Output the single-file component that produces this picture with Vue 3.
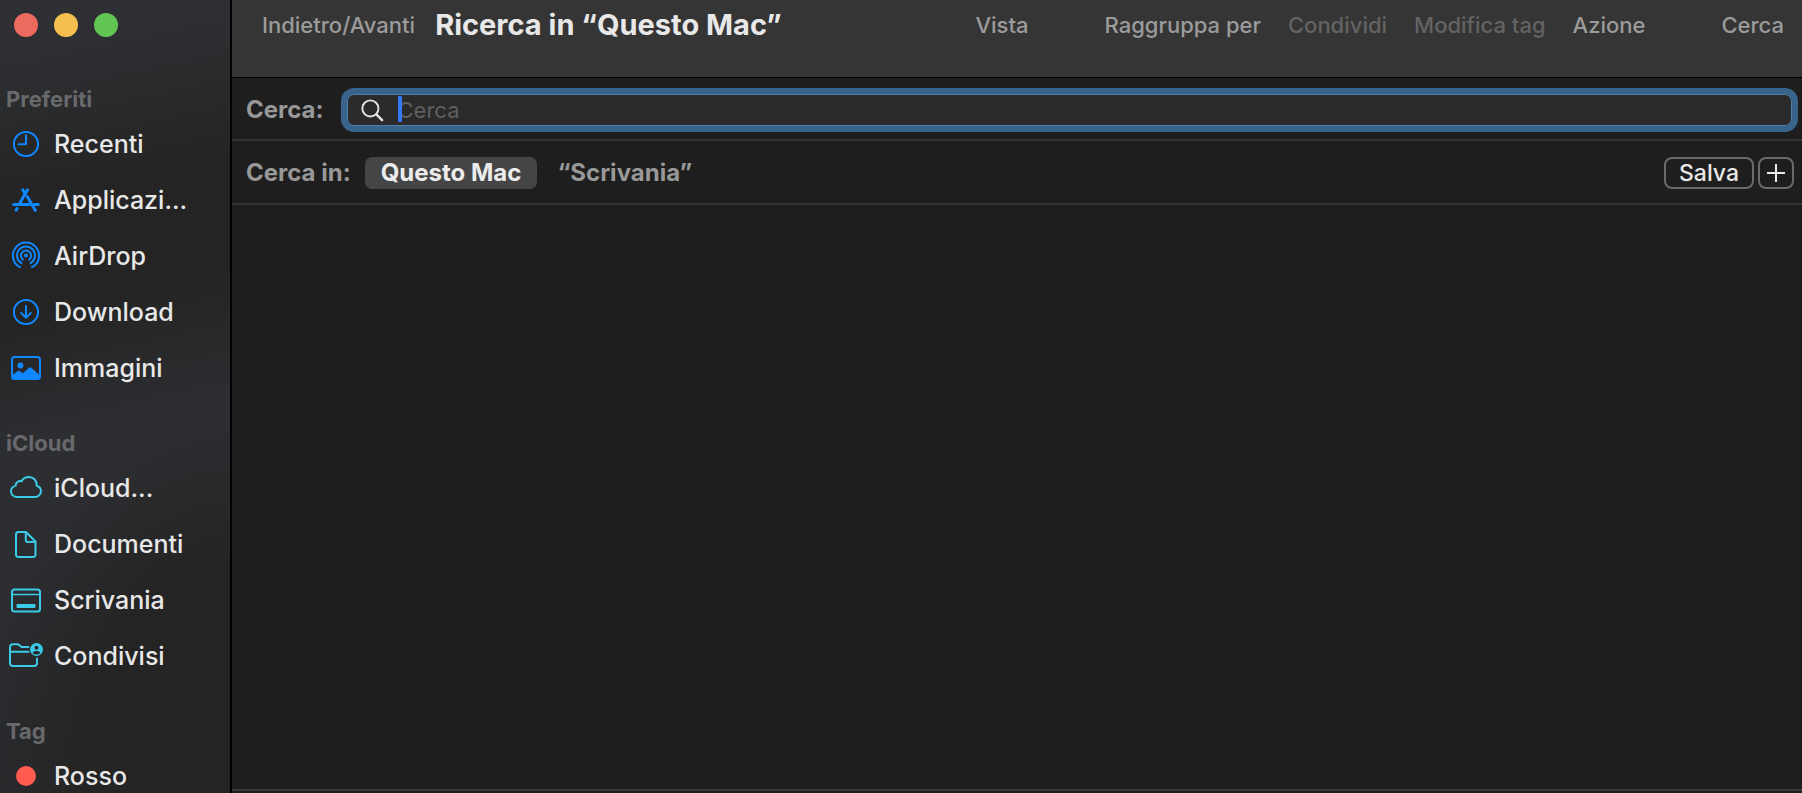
<template>
  <div class="finestra">
    <!-- Simboli usati dalle voci della barra laterale -->
    <svg class="simboli" aria-hidden="true">
      <symbol id="recenti" viewBox="0 0 34 34">
        <circle cx="17" cy="17" r="12.1" />
        <path d="M17 8.2V17.3H9.5" />
      </symbol>
      <symbol id="applicazioni" viewBox="0 0 34 34">
        <g stroke-width="3">
          <path d="M18.6 6.8 10.6 20.5" />
          <path d="M13.8 6.8 16 10.5" />
          <path d="M18.2 13.6 26.4 27.4" />
          <path d="M4.6 21.6H20.3" />
          <path d="M25.5 21.6H29.2" />
          <path d="M8.1 25.6 7.1 27.3" />
        </g>
      </symbol>
      <symbol id="airdrop" viewBox="0 0 34 34">
        <circle cx="17" cy="16.6" r="2" fill="currentColor" stroke="none" />
        <path d="M13.8 20.6A5.1 5.1 0 1 1 20.2 20.6" />
        <path d="M12.4 24.2A9 9 0 1 1 21.6 24.2" />
        <path d="M10.9 28.2A13.1 13.1 0 1 1 23.1 28.2" />
      </symbol>
      <symbol id="download" viewBox="0 0 34 34">
        <circle cx="17" cy="17" r="12.1" />
        <path d="M17 11V22.6M12.2 18 17 22.8 21.8 18" />
      </symbol>
      <symbol id="immagini" viewBox="0 0 34 34">
        <rect x="3" y="6" width="28" height="22" rx="2.5" />
        <circle cx="11.4" cy="14.6" r="3" fill="currentColor" stroke="none" />
        <path
          d="M3 24.5 8.5 20.2Q9.8 19.2 11 20.2L13.5 22.4 19.8 16.9Q21.2 15.8 22.5 16.9L31 24.6V27Q31 28 29 28H5Q3 28 3 26.5Z"
          fill="currentColor" stroke="none"
        />
      </symbol>
      <symbol id="nuvola" viewBox="0 0 34 34">
        <path d="M8.2 26H25.6A6 6 0 0 0 32 20.3C32 17.4 30.3 15.5 27.8 14.7C28 9.2 24.3 6 19.9 6C16.3 6 13.9 7.6 12.6 10.2C9.3 9.6 6.8 11.6 6.6 14.6C3.7 15.4 2 17.5 2 20.2C2 23.6 4.6 26 8.2 26Z" />
      </symbol>
      <symbol id="documento" viewBox="0 0 34 34">
        <path d="M17 5H9.5Q7 5 7 7.5V27.5Q7 30 9.5 30H24Q26.5 30 26.5 27.5V14.5Z" />
        <path d="M16.8 5.5V13Q16.8 15 18.8 15H26" />
      </symbol>
      <symbol id="scrivania" viewBox="0 0 34 34">
        <rect x="3" y="6.5" width="28" height="22" rx="2.5" />
        <path d="M3 11.5H31" stroke-width="1.6" />
        <rect x="7.5" y="21" width="19" height="4" rx="1" fill="currentColor" stroke="none" />
      </symbol>
      <symbol id="condivisi" viewBox="0 0 34 34">
        <path d="M19.5 8H12.5L10.5 6.3Q9.5 5.3 8 5.3H4Q1 5.3 1 8.3V24Q1 27 4 27H25Q28 27 28 24V19.5" />
        <path d="M1 12.8H19.5" />
        <circle cx="27.5" cy="10.5" r="6.5" fill="currentColor" stroke="none" />
        <circle cx="27.5" cy="8.7" r="2" fill="#25262a" stroke="none" />
        <path d="M23.7 14.3Q24.3 11.9 27.5 11.9T31.3 14.3Q29.5 15.6 27.5 15.6T23.7 14.3Z" fill="#25262a" stroke="none" />
      </symbol>
      <symbol id="punto" viewBox="0 0 34 34">
        <circle cx="17" cy="17" r="10" fill="currentColor" stroke="none" />
      </symbol>
    </svg>

    <!-- Barra laterale -->
    <aside class="laterale">
      <div class="semafori">
        <button class="semaforo rosso" aria-label="Chiudi"></button>
        <button class="semaforo giallo" aria-label="Riduci"></button>
        <button class="semaforo verde" aria-label="Ingrandisci"></button>
      </div>

      <nav v-for="sezione in sezioni" :key="sezione.titolo" class="sezione">
        <h2 class="intestazione">{{ sezione.titolo }}</h2>
        <a
          v-for="voce in sezione.voci"
          :key="voce.nome"
          href="#"
          class="voce"
          @click.prevent
        >
          <svg class="icona" :class="sezione.colore"><use :href="'#' + voce.icona" /></svg>
          <span class="nome">{{ voce.nome }}</span>
        </a>
      </nav>
    </aside>

    <main class="contenuto">
      <!-- Barra degli strumenti -->
      <header class="strumenti">
        <button class="strumento">Indietro/Avanti</button>
        <h1 class="titolo">Ricerca in “Questo Mac”</h1>
        <div class="azioni">
          <button class="strumento stacco">Vista</button>
          <button class="strumento">Raggruppa per</button>
          <button class="strumento" disabled>Condividi</button>
          <button class="strumento" disabled>Modifica tag</button>
          <button class="strumento stacco">Azione</button>
          <button class="strumento">Cerca</button>
        </div>
      </header>

      <!-- Campo di ricerca -->
      <div class="riga ricerca">
        <label class="etichetta" for="cerca">Cerca:</label>
        <div class="campo">
          <svg class="lente" viewBox="0 0 24 24" aria-hidden="true">
            <circle cx="9.8" cy="9.8" r="8.4" />
            <path d="M16 16 22 22" stroke-width="2.6" />
          </svg>
          <div class="testo">
            <input id="cerca" v-model="ricerca" type="text" placeholder="Cerca" />
            <span v-if="!ricerca" class="cursore"></span>
          </div>
        </div>
      </div>

      <!-- Ambito della ricerca -->
      <div class="riga ambiti">
        <span class="etichetta">Cerca in:</span>
        <button
          v-for="nome in ambiti"
          :key="nome"
          class="ambito"
          :class="{ attivo: nome === ambito }"
          @click="ambito = nome"
        >
          {{ nome }}
        </button>
        <div class="comandi">
          <button class="comando">Salva</button>
          <button class="comando piu" aria-label="Aggiungi criterio">
            <svg viewBox="0 0 18 18"><path d="M9 0V18M0 9H18" /></svg>
          </button>
        </div>
      </div>

      <div class="risultati"></div>
      <footer class="fondo"></footer>
    </main>
  </div>
</template>

<script setup>
import { ref } from 'vue'

// Voci della barra laterale divise per sezione
const sezioni = [
  {
    titolo: 'Preferiti',
    colore: 'blu',
    voci: [
      { nome: 'Recenti', icona: 'recenti' },
      { nome: 'Applicazi...', icona: 'applicazioni' },
      { nome: 'AirDrop', icona: 'airdrop' },
      { nome: 'Download', icona: 'download' },
      { nome: 'Immagini', icona: 'immagini' }
    ]
  },
  {
    titolo: 'iCloud',
    colore: 'ciano',
    voci: [
      { nome: 'iCloud...', icona: 'nuvola' },
      { nome: 'Documenti', icona: 'documento' },
      { nome: 'Scrivania', icona: 'scrivania' },
      { nome: 'Condivisi', icona: 'condivisi' }
    ]
  },
  {
    titolo: 'Tag',
    colore: 'corallo',
    voci: [{ nome: 'Rosso', icona: 'punto' }]
  }
]

const ambiti = ['Questo Mac', '“Scrivania”']
const ambito = ref('Questo Mac')
const ricerca = ref('')
</script>

<style>
body {
  margin: 0;
  background-color: #1e1e1e;
}
</style>

<style scoped>
.finestra {
  display: flex;
  height: 100vh;
  overflow: hidden;
  font-family: Inter, "Liberation Sans", sans-serif;
  color: #e8e8e8;
}

.simboli {
  position: absolute;
  width: 0;
  height: 0;
}

button {
  margin: 0;
  padding: 0;
  border: none;
  background: none;
  font-family: inherit;
  color: inherit;
}

/* Barra laterale */
.laterale {
  flex: none;
  width: 230px;
  overflow: hidden;
  border-right: 2px solid #000;
  background:
    radial-gradient(ellipse 240px 330px at 100% 94%, #242424 55%, transparent 100%),
    linear-gradient(168deg, #2f3033 0%, #2d2e31 9%, #242424 24%, #242424 38%, #2d2e32 54%, #2c2d31 70%, #28292b 100%);
}

.semafori {
  display: flex;
  gap: 16px;
  height: 69px;
  padding: 13px 14px 0;
}

.semaforo {
  width: 24px;
  height: 24px;
  border-radius: 50%;
}

.rosso { background-color: #ed6a5e; }
.giallo { background-color: #f5bf4f; }
.verde { background-color: #61c554; }

.sezione { margin-bottom: 30px; }

.intestazione {
  margin: 0;
  padding-left: 6px;
  font-size: 22px;
  font-weight: 700;
  line-height: 34px;
  color: #68696b;
}

.voce {
  display: flex;
  align-items: center;
  gap: 11px;
  height: 56px;
  padding-left: 9px;
  color: inherit;
  text-decoration: none;
}

.icona {
  flex: none;
  width: 34px;
  height: 34px;
  fill: none;
  stroke: currentColor;
  stroke-width: 2;
  stroke-linecap: round;
  stroke-linejoin: round;
}

.blu { color: #0f87ff; }
.ciano { color: #3bcbe8; }
.corallo { color: #ff5b50; }

.nome {
  font-size: 25px;
  font-weight: 500;
  line-height: 30px;
  white-space: nowrap;
}

/* Area principale */
.contenuto {
  flex: 1;
  min-width: 0;
  display: flex;
  flex-direction: column;
  background-color: #1e1e1e;
}

.strumenti {
  display: flex;
  align-items: flex-start;
  gap: 20px;
  height: 77px;
  padding: 0 18px 0 30px;
  border-bottom: 1px solid #000;
  background-color: #353535;
  white-space: nowrap;
}

.strumento {
  font-size: 22px;
  line-height: 50px;
  font-weight: 500;
  color: #9b9b9b;
}

.strumento:disabled { color: #636363; }

.titolo {
  margin: 0;
  font-size: 29px;
  font-weight: 700;
  line-height: 50px;
}

.azioni {
  display: flex;
  gap: 27px;
  margin-left: auto;
}

.stacco { margin-right: 49px; }

.riga {
  display: flex;
  align-items: center;
  border-bottom: 2px solid #343434;
}

.etichetta {
  font-size: 24px;
  font-weight: 700;
  line-height: 30px;
  color: #989898;
}

.ricerca {
  gap: 17px;
  padding: 10px 4px 7px 14px;
}

.campo {
  flex: 1;
  display: flex;
  align-items: center;
  gap: 14px;
  height: 32px;
  padding-left: 14px;
  border: 6px solid #38648c;
  border-radius: 13px;
  background-color: #2a2a2a;
  box-shadow: inset 0 0 0 1px #4d7fa9;
}

.lente {
  flex: none;
  width: 23px;
  height: 23px;
  fill: none;
  stroke: #e4e4e4;
  stroke-width: 2;
  stroke-linecap: round;
}

.testo {
  position: relative;
  flex: 1;
  display: flex;
}

.testo input {
  flex: 1;
  min-width: 0;
  padding: 0;
  border: none;
  outline: none;
  background: none;
  font-family: inherit;
  font-size: 22px;
  line-height: 28px;
  color: #e8e8e8;
}

.testo input::placeholder {
  color: #5f5f5f;
  opacity: 1;
}

.cursore {
  position: absolute;
  top: 0;
  left: 0;
  width: 4px;
  height: 26px;
  border-radius: 1px;
  background-color: #3478f6;
}

.ambiti {
  gap: 14px;
  padding: 16px 8px 14px 14px;
}

.ambito {
  height: 32px;
  padding: 0 16px;
  border-radius: 7px;
  font-size: 24px;
  font-weight: 700;
  line-height: 30px;
  color: #989898;
}

.ambito + .ambito { padding: 0 6px; }

.attivo {
  background-color: #454545;
  color: #ececec;
}

.comandi {
  display: flex;
  gap: 4px;
  margin-left: auto;
}

.comando {
  height: 32px;
  padding: 0 13px;
  border: 2px solid #6a6a6a;
  border-radius: 8px;
  font-size: 23px;
  font-weight: 500;
  line-height: 26px;
}

.piu {
  display: flex;
  align-items: center;
  padding: 0 7px;
}

.piu svg {
  width: 18px;
  height: 18px;
  stroke: #e8e8e8;
  stroke-width: 2;
}

.risultati { flex: 1; }

.fondo {
  height: 2px;
  border-top: 2px solid #3a3a3a;
}
</style>
